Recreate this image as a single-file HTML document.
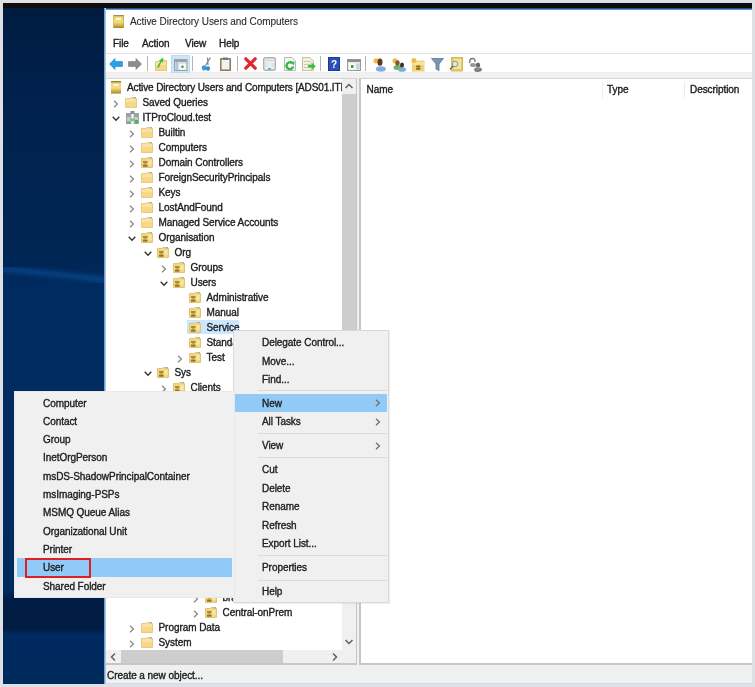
<!DOCTYPE html>
<html><head><meta charset="utf-8">
<style>
*{margin:0;padding:0;box-sizing:border-box}
html,body{width:755px;height:687px;overflow:hidden;background:#dfe0e4}
body{position:relative;font-family:"Liberation Sans",sans-serif;font-size:10px;color:#000}
.a{position:absolute}
.wrap{position:absolute;left:0;top:0;width:755px;height:687px;filter:blur(0.3px)}
.t{position:absolute;white-space:nowrap;line-height:12px;font-size:10px;color:#202024;-webkit-text-stroke:0.35px #202024;letter-spacing:-0.06px}
</style></head><body><div class="wrap">
<div class="a" style="left:3px;top:3px;width:749px;height:681px;background:linear-gradient(#001b40 0px,#00214c 90px,#002452 200px,#002656 262px,#002b60 282px,#002c62 390px,#002a5e 588px,#001c44 596px,#001c43 626px,#002a60 631px,#00295c 681px)"></div>
<svg class="a" style="left:3px;top:250px" width="101" height="45" viewBox="0 0 101 45"><defs><filter id="bl"><feGaussianBlur stdDeviation="2.2"/></filter></defs><path d="M-5 19 Q40 22 110 31" stroke="#0a5aa8" stroke-width="6" fill="none" opacity=".5" filter="url(#bl)"/></svg>
<div class="a" style="left:3px;top:3px;width:749px;height:5px;background:#0e0d0d"></div>
<div class="a" style="left:105px;top:8px;width:647px;height:676px;background:#fff"></div>
<div class="a" style="left:104px;top:8px;width:648px;height:2px;background:linear-gradient(#07306e,#8fb0d8)"></div>
<div class="a" style="left:104px;top:8px;width:2px;height:676px;background:linear-gradient(90deg,#5f8cc0,#c4dcf0)"></div>
<svg class="a" style="left:113px;top:15px" width="11" height="13" viewBox="0 0 11 13"><defs><linearGradient id="gy" x1="0" x2="0" y1="0" y2="1"><stop offset="0" stop-color="#e8d070"/><stop offset=".55" stop-color="#f4dc84"/><stop offset=".85" stop-color="#c8a838"/><stop offset="1" stop-color="#9a8028"/></linearGradient></defs><rect x="0" y="0" width="11" height="13" fill="url(#gy)"/><rect x="0" y="0" width="11" height="1.2" fill="#a09040"/><rect x="3" y="2.8" width="5" height="2.2" fill="#fff8d8"/><rect x="0" y="0" width="1" height="13" fill="#d8bc58" opacity=".7"/><rect x="10" y="0" width="1" height="13" fill="#c0a040" opacity=".7"/></svg>
<div class="t" style="left:130px;top:15.5px;color:#2a2a2a;-webkit-text-stroke:0.1px #2a2a2a">Active Directory Users and Computers</div>
<div class="t" style="left:113px;top:38.0px;">File</div>
<div class="t" style="left:142px;top:38.0px;">Action</div>
<div class="t" style="left:185px;top:38.0px;">View</div>
<div class="t" style="left:219px;top:38.0px;">Help</div>
<div class="a" style="left:106px;top:53px;width:646px;height:1px;background:#e3e3e3"></div>
<div class="a" style="left:106px;top:72px;width:646px;height:6px;background:#f0f0f0"></div>
<svg class="a" style="left:109px;top:58px" width="14" height="12" viewBox="0 0 14 12"><path d="M0.5 6 L6 0.5 V3.5 H13.5 V8.5 H6 V11.5Z" fill="#2d9ee8" stroke="#1f7fc8" stroke-width="0.6"/></svg>
<svg class="a" style="left:128px;top:58px" width="14" height="12" viewBox="0 0 14 12"><path d="M13.5 6 L8 0.5 V3.5 H0.5 V8.5 H8 V11.5Z" fill="#8c8c8c" stroke="#777" stroke-width="0.6"/></svg>
<div class="a" style="left:147px;top:56px;width:1px;height:15px;background:#b4b4b4"></div>
<div class="a" style="left:192px;top:56px;width:1px;height:15px;background:#b4b4b4"></div>
<div class="a" style="left:237px;top:56px;width:1px;height:15px;background:#b4b4b4"></div>
<div class="a" style="left:320px;top:56px;width:1px;height:15px;background:#b4b4b4"></div>
<div class="a" style="left:365px;top:56px;width:1px;height:15px;background:#b4b4b4"></div>
<svg class="a" style="left:155px;top:57px" width="13" height="14" viewBox="0 0 13 14"><path d="M0.5 4.5 H5 L6 3.5 H11.5 V13.5 H0.5Z" fill="#f6d88a" stroke="#e6c878"/><rect x="1" y="5" width="10" height="3" fill="#f9e4a8"/><path d="M2 10.5 Q3.5 6.5 5.5 4.5 L4 3.5 L8.5 0.5 L8 5.5 L6.8 4.8 Q5 7 4 10.5Z" fill="#3cc03c"/></svg>
<div class="a" style="left:171px;top:55px;width:19px;height:18px;background:#cce5f9;border:1px solid #bcdcf6"></div>
<svg class="a" style="left:174px;top:59px" width="14" height="12" viewBox="0 0 14 12"><rect x="0.5" y="0.5" width="12.5" height="11" fill="#dde2e8" stroke="#9ca2aa"/><rect x="0.5" y="0.5" width="12.5" height="2.5" fill="#9aa0a6"/><rect x="1.5" y="3" width="2.5" height="8" fill="#b8c4d2"/><rect x="5.5" y="5" width="6.5" height="5.5" fill="#fafafa"/><circle cx="8.5" cy="7.8" r="1.3" fill="#2fa23a"/></svg>
<svg class="a" style="left:201px;top:57px" width="11" height="14" viewBox="0 0 11 14"><path d="M9.5 0.5 L4.5 8.5 M6.5 0.5 L7 8" stroke="#8a8a8a" stroke-width="1.3" fill="none"/><ellipse cx="3.2" cy="10.8" rx="2.4" ry="2.6" fill="#3a9be0"/><ellipse cx="7" cy="11.5" rx="2" ry="2.2" fill="#2f86cc"/></svg>
<svg class="a" style="left:220px;top:57px" width="11" height="14" viewBox="0 0 11 14"><rect x="0.8" y="1.8" width="9.4" height="11.4" fill="#eef2f6" stroke="#8a6a44" stroke-width="1.4"/><rect x="3" y="0.5" width="5" height="2.5" fill="#777"/></svg>
<svg class="a" style="left:244px;top:57px" width="13" height="13" viewBox="0 0 13 13"><path d="M1.8 1.8 L11.2 11.2 M11.2 1.8 L1.8 11.2" stroke="#e3262b" stroke-width="3.2" stroke-linecap="round"/></svg>
<svg class="a" style="left:263px;top:57px" width="13" height="14" viewBox="0 0 13 14"><rect x="0.7" y="0.7" width="11.6" height="12.6" rx="1.5" fill="#eceeef" stroke="#b2b2b2" stroke-width="1.4"/><rect x="2.5" y="3" width="8" height="1" fill="#d0d0d0"/><rect x="2.5" y="6" width="2" height="4" fill="#cfe3ea"/><rect x="8.5" y="6" width="2" height="4" fill="#d8e6d8"/><rect x="5" y="11" width="3" height="1.5" fill="#3aa8d8"/></svg>
<svg class="a" style="left:284px;top:57px" width="12" height="14" viewBox="0 0 12 14"><path d="M0.5 0.5 H8 L11.5 4 V13.5 H0.5Z" fill="#f6f6f6" stroke="#b8b8b8"/><path d="M8.2 6.2 A3.4 3.4 0 1 0 9.2 9.5" fill="none" stroke="#34b83a" stroke-width="2.4"/><path d="M6.5 5 L10.5 4.5 L10 8.5Z" fill="#34b83a"/></svg>
<svg class="a" style="left:302px;top:57px" width="14" height="14" viewBox="0 0 14 14"><path d="M0.5 0.5 H8 L11.5 4 V13.5 H0.5Z" fill="#f4f0dc" stroke="#c4c0a8"/><rect x="2" y="4" width="7" height="0.8" fill="#c8c0a0"/><rect x="2" y="7" width="7" height="0.8" fill="#c8c0a0"/><rect x="2" y="10" width="7" height="0.8" fill="#c8c0a0"/><path d="M6 8 H9.5 V5.5 L13.8 9.3 L9.5 13 V10.5 H6Z" fill="#3cbc44"/></svg>
<svg class="a" style="left:328px;top:57px" width="12" height="14" viewBox="0 0 12 14"><rect x="0.5" y="0.5" width="11" height="13" fill="#2a4fb8" stroke="#1a3a90"/><text x="6" y="11" font-size="10" font-family="Liberation Sans" font-weight="bold" fill="#fff" text-anchor="middle">?</text></svg>
<svg class="a" style="left:347px;top:59px" width="14" height="12" viewBox="0 0 14 12"><rect x="0.5" y="0.5" width="13" height="11" fill="#eaeaea" stroke="#9a9a9a"/><rect x="0.5" y="0.5" width="13" height="2.5" fill="#8c8c8c"/><rect x="2" y="4.5" width="6" height="6" fill="#fff"/><rect x="4" y="6" width="2.5" height="3" fill="#2fa23a"/><rect x="9.5" y="4.5" width="3" height="6" fill="#c8d0d8"/></svg>
<svg class="a" style="left:373px;top:57px" width="14" height="15" viewBox="0 0 14 15"><circle cx="3" cy="3.8" r="2.6" fill="#f2bb48"/><ellipse cx="7.8" cy="12" rx="5" ry="2.8" fill="#80aee0"/><ellipse cx="7" cy="5.2" rx="2.5" ry="3.6" fill="#5a3a22"/></svg>
<svg class="a" style="left:392px;top:57px" width="15" height="15" viewBox="0 0 15 15"><circle cx="3" cy="3.8" r="2.6" fill="#f2bb48"/><ellipse cx="5.5" cy="10.5" rx="4" ry="2.5" fill="#6ab85a"/><ellipse cx="5.5" cy="6" rx="2.2" ry="2.8" fill="#7a5a40"/><ellipse cx="10" cy="12.5" rx="4" ry="2.3" fill="#7aaee0"/><ellipse cx="10" cy="8" rx="2" ry="2.6" fill="#3a3020"/></svg>
<svg class="a" style="left:411px;top:57px" width="14" height="15" viewBox="0 0 14 15"><path d="M1 4.5 H6 L7 3.5 H13.5 V14.5 H1Z" fill="#f0d078"/><rect x="1.5" y="5" width="11.5" height="3" fill="#f8e2a0"/><circle cx="3" cy="3.5" r="2.6" fill="#f2bb48"/><rect x="5" y="8" width="4.5" height="5" fill="#c0a040"/><rect x="5.5" y="9" width="3.5" height="1" fill="#806820"/><rect x="5.5" y="11" width="3.5" height="1.5" fill="#806820"/></svg>
<svg class="a" style="left:431px;top:58px" width="13" height="13" viewBox="0 0 13 13"><path d="M0.5 0.5 H12.5 L8 6 V12.5 L5 11 V6Z" fill="#7896b2" stroke="#6a88a4"/></svg>
<svg class="a" style="left:449px;top:57px" width="14" height="15" viewBox="0 0 14 15"><rect x="2.5" y="0.5" width="11" height="13.5" fill="#e4cc68" stroke="#d4bc58"/><rect x="5" y="2" width="7" height="10" fill="#f2e49a"/><circle cx="6" cy="7" r="2.8" fill="#dfe8e0" stroke="#8a9a8a" stroke-width="1"/><path d="M4 9 L1 12.5" stroke="#6a6a6a" stroke-width="1.3"/></svg>
<svg class="a" style="left:468px;top:57px" width="15" height="15" viewBox="0 0 15 15"><path d="M2 6 Q1 1.5 4.5 1.5 Q7.5 1.5 7 5" fill="none" stroke="#777" stroke-width="1.4"/><ellipse cx="5" cy="8" rx="3" ry="2" fill="#9a9a9a"/><ellipse cx="10" cy="8" rx="2.2" ry="2.6" fill="#6a6a6a"/><ellipse cx="10" cy="12.5" rx="4" ry="2.2" fill="#8a8a8a"/><path d="M7 14 Q10 15 13 13" stroke="#555" stroke-width=".8" fill="none"/></svg>
<div class="a" style="left:106px;top:78px;width:251px;height:587px;background:#fff;border-top:1px solid #d4d4d4;border-right:2px solid #c6c6c6;border-bottom:2px solid #c6c6c6"></div>
<div class="a" style="left:357px;top:78px;width:3px;height:587px;background:#f0f0f0"></div>
<div class="a" style="left:359px;top:78px;width:393px;height:587px;background:#fff;border-top:1px solid #d4d4d4;border-left:2px solid #c6c6c6;border-bottom:2px solid #c6c6c6"></div>
<div class="a" style="left:106px;top:665px;width:646px;height:18px;background:#f0f0f0"></div>
<div class="a" style="left:106px;top:683px;width:646px;height:1px;background:#cfdff0"></div>
<div class="t" style="left:107px;top:669.5px;">Create a new object...</div>
<div class="a" style="left:105px;top:79px;width:237px;height:571px;overflow:hidden">
<div class="t" style="left:22px;top:2.5px;letter-spacing:-0.12px">Active Directory Users and Computers [ADS01.ITProCloud.test]</div>
<svg class="a" style="left:6px;top:2px" width="11" height="13" viewBox="0 0 11 13"><defs><linearGradient id="gy2" x1="0" x2="0" y1="0" y2="1"><stop offset="0" stop-color="#e8d070"/><stop offset=".55" stop-color="#f4dc84"/><stop offset=".85" stop-color="#c8a838"/><stop offset="1" stop-color="#9a8028"/></linearGradient></defs><rect x="0" y="0" width="10" height="12.5" fill="url(#gy2)"/><rect x="0" y="0" width="10" height="1.4" fill="#8c8a3a"/><rect x="2.5" y="2.8" width="5" height="2.2" fill="#fff8d8"/></svg>
<div class="t" style="left:37.5px;top:17.5px;">Saved Queries</div>
<svg class="a" style="left:20px;top:18px" width="12" height="11" viewBox="0 0 12 11"><path d="M0.5 1.5 H5 L6 0.5 H10.5 V1.5 H11.5 V10.5 H0.5Z" fill="#f6d888" stroke="#e8cb7c"/><rect x="1" y="2" width="10" height="3" fill="#f9e3a4"/><rect x="9" y="0" width="2" height="1.5" fill="#9cb4cc"/></svg>
<svg class="a" style="left:8px;top:21px" width="6" height="8" viewBox="0 0 6 8"><path d="M1 0.8 L4.4 4 L1 7.2" fill="none" stroke="#8a8a8a" stroke-width="1.3"/></svg>
<div class="t" style="left:37.5px;top:32.5px;">ITProCloud.test</div>
<svg class="a" style="left:21px;top:32px" width="13" height="13" viewBox="0 0 13 13"><rect x="4.5" y="0" width="4" height="3" fill="#8a9096"/><rect x="0.5" y="2.5" width="4.5" height="10" fill="#c4cad2" stroke="#8e949c" stroke-width="0.8"/><rect x="8" y="2.5" width="4.5" height="10" fill="#c4cad2" stroke="#8e949c" stroke-width="0.8"/><rect x="1" y="3" width="3.5" height="3" fill="#9aa0a8"/><rect x="8.5" y="3" width="3.5" height="3" fill="#9aa0a8"/><rect x="5" y="7.5" width="3" height="2.5" fill="#7cc850"/><rect x="9" y="9" width="3" height="3.5" fill="#4cb840"/><rect x="1" y="10.5" width="3.5" height="2" fill="#6aa878"/></svg>
<svg class="a" style="left:7px;top:37px" width="8" height="6" viewBox="0 0 8 6"><path d="M0.7 0.8 L4 4.2 L7.3 0.8" fill="none" stroke="#333" stroke-width="1.4"/></svg>
<div class="t" style="left:53.5px;top:47.5px;">Builtin</div>
<svg class="a" style="left:36px;top:48px" width="12" height="11" viewBox="0 0 12 11"><path d="M0.5 1.5 H5 L6 0.5 H10.5 V1.5 H11.5 V10.5 H0.5Z" fill="#f6d888" stroke="#e8cb7c"/><rect x="1" y="2" width="10" height="3" fill="#f9e3a4"/><rect x="9" y="0" width="2" height="1.5" fill="#9cb4cc"/></svg>
<svg class="a" style="left:24px;top:51px" width="6" height="8" viewBox="0 0 6 8"><path d="M1 0.8 L4.4 4 L1 7.2" fill="none" stroke="#8a8a8a" stroke-width="1.3"/></svg>
<div class="t" style="left:53.5px;top:62.5px;">Computers</div>
<svg class="a" style="left:36px;top:63px" width="12" height="11" viewBox="0 0 12 11"><path d="M0.5 1.5 H5 L6 0.5 H10.5 V1.5 H11.5 V10.5 H0.5Z" fill="#f6d888" stroke="#e8cb7c"/><rect x="1" y="2" width="10" height="3" fill="#f9e3a4"/><rect x="9" y="0" width="2" height="1.5" fill="#9cb4cc"/></svg>
<svg class="a" style="left:24px;top:66px" width="6" height="8" viewBox="0 0 6 8"><path d="M1 0.8 L4.4 4 L1 7.2" fill="none" stroke="#8a8a8a" stroke-width="1.3"/></svg>
<div class="t" style="left:53.5px;top:77.5px;">Domain Controllers</div>
<svg class="a" style="left:36px;top:78px" width="12" height="11" viewBox="0 0 12 11"><path d="M0.5 1.5 H5 L6 0.5 H10.5 V1.5 H11.5 V10.5 H0.5Z" fill="#f2d684" stroke="#e2c474"/><rect x="9" y="0" width="2" height="1.5" fill="#9cb4cc"/><rect x="7.5" y="3" width="3" height="5" fill="#f9e6a6"/><rect x="2" y="4" width="4.5" height="2" fill="#a88d34"/><rect x="3" y="6" width="2.5" height="1" fill="#c4a84a"/><rect x="2" y="7.5" width="4.5" height="2.2" fill="#8e7624"/></svg>
<svg class="a" style="left:24px;top:81px" width="6" height="8" viewBox="0 0 6 8"><path d="M1 0.8 L4.4 4 L1 7.2" fill="none" stroke="#8a8a8a" stroke-width="1.3"/></svg>
<div class="t" style="left:53.5px;top:92.5px;">ForeignSecurityPrincipals</div>
<svg class="a" style="left:36px;top:93px" width="12" height="11" viewBox="0 0 12 11"><path d="M0.5 1.5 H5 L6 0.5 H10.5 V1.5 H11.5 V10.5 H0.5Z" fill="#f6d888" stroke="#e8cb7c"/><rect x="1" y="2" width="10" height="3" fill="#f9e3a4"/><rect x="9" y="0" width="2" height="1.5" fill="#9cb4cc"/></svg>
<svg class="a" style="left:24px;top:96px" width="6" height="8" viewBox="0 0 6 8"><path d="M1 0.8 L4.4 4 L1 7.2" fill="none" stroke="#8a8a8a" stroke-width="1.3"/></svg>
<div class="t" style="left:53.5px;top:107.5px;">Keys</div>
<svg class="a" style="left:36px;top:108px" width="12" height="11" viewBox="0 0 12 11"><path d="M0.5 1.5 H5 L6 0.5 H10.5 V1.5 H11.5 V10.5 H0.5Z" fill="#f6d888" stroke="#e8cb7c"/><rect x="1" y="2" width="10" height="3" fill="#f9e3a4"/><rect x="9" y="0" width="2" height="1.5" fill="#9cb4cc"/></svg>
<svg class="a" style="left:24px;top:111px" width="6" height="8" viewBox="0 0 6 8"><path d="M1 0.8 L4.4 4 L1 7.2" fill="none" stroke="#8a8a8a" stroke-width="1.3"/></svg>
<div class="t" style="left:53.5px;top:122.5px;">LostAndFound</div>
<svg class="a" style="left:36px;top:123px" width="12" height="11" viewBox="0 0 12 11"><path d="M0.5 1.5 H5 L6 0.5 H10.5 V1.5 H11.5 V10.5 H0.5Z" fill="#f6d888" stroke="#e8cb7c"/><rect x="1" y="2" width="10" height="3" fill="#f9e3a4"/><rect x="9" y="0" width="2" height="1.5" fill="#9cb4cc"/></svg>
<svg class="a" style="left:24px;top:126px" width="6" height="8" viewBox="0 0 6 8"><path d="M1 0.8 L4.4 4 L1 7.2" fill="none" stroke="#8a8a8a" stroke-width="1.3"/></svg>
<div class="t" style="left:53.5px;top:137.5px;">Managed Service Accounts</div>
<svg class="a" style="left:36px;top:138px" width="12" height="11" viewBox="0 0 12 11"><path d="M0.5 1.5 H5 L6 0.5 H10.5 V1.5 H11.5 V10.5 H0.5Z" fill="#f6d888" stroke="#e8cb7c"/><rect x="1" y="2" width="10" height="3" fill="#f9e3a4"/><rect x="9" y="0" width="2" height="1.5" fill="#9cb4cc"/></svg>
<svg class="a" style="left:24px;top:141px" width="6" height="8" viewBox="0 0 6 8"><path d="M1 0.8 L4.4 4 L1 7.2" fill="none" stroke="#8a8a8a" stroke-width="1.3"/></svg>
<div class="t" style="left:53.5px;top:152.5px;">Organisation</div>
<svg class="a" style="left:36px;top:153px" width="12" height="11" viewBox="0 0 12 11"><path d="M0.5 1.5 H5 L6 0.5 H10.5 V1.5 H11.5 V10.5 H0.5Z" fill="#f2d684" stroke="#e2c474"/><rect x="9" y="0" width="2" height="1.5" fill="#9cb4cc"/><rect x="7.5" y="3" width="3" height="5" fill="#f9e6a6"/><rect x="2" y="4" width="4.5" height="2" fill="#a88d34"/><rect x="3" y="6" width="2.5" height="1" fill="#c4a84a"/><rect x="2" y="7.5" width="4.5" height="2.2" fill="#8e7624"/></svg>
<svg class="a" style="left:23px;top:157px" width="8" height="6" viewBox="0 0 8 6"><path d="M0.7 0.8 L4 4.2 L7.3 0.8" fill="none" stroke="#333" stroke-width="1.4"/></svg>
<div class="t" style="left:69.5px;top:167.5px;">Org</div>
<svg class="a" style="left:52px;top:168px" width="12" height="11" viewBox="0 0 12 11"><path d="M0.5 1.5 H5 L6 0.5 H10.5 V1.5 H11.5 V10.5 H0.5Z" fill="#f2d684" stroke="#e2c474"/><rect x="9" y="0" width="2" height="1.5" fill="#9cb4cc"/><rect x="7.5" y="3" width="3" height="5" fill="#f9e6a6"/><rect x="2" y="4" width="4.5" height="2" fill="#a88d34"/><rect x="3" y="6" width="2.5" height="1" fill="#c4a84a"/><rect x="2" y="7.5" width="4.5" height="2.2" fill="#8e7624"/></svg>
<svg class="a" style="left:39px;top:172px" width="8" height="6" viewBox="0 0 8 6"><path d="M0.7 0.8 L4 4.2 L7.3 0.8" fill="none" stroke="#333" stroke-width="1.4"/></svg>
<div class="t" style="left:85.5px;top:182.5px;">Groups</div>
<svg class="a" style="left:68px;top:183px" width="12" height="11" viewBox="0 0 12 11"><path d="M0.5 1.5 H5 L6 0.5 H10.5 V1.5 H11.5 V10.5 H0.5Z" fill="#f2d684" stroke="#e2c474"/><rect x="9" y="0" width="2" height="1.5" fill="#9cb4cc"/><rect x="7.5" y="3" width="3" height="5" fill="#f9e6a6"/><rect x="2" y="4" width="4.5" height="2" fill="#a88d34"/><rect x="3" y="6" width="2.5" height="1" fill="#c4a84a"/><rect x="2" y="7.5" width="4.5" height="2.2" fill="#8e7624"/></svg>
<svg class="a" style="left:56px;top:186px" width="6" height="8" viewBox="0 0 6 8"><path d="M1 0.8 L4.4 4 L1 7.2" fill="none" stroke="#8a8a8a" stroke-width="1.3"/></svg>
<div class="t" style="left:85.5px;top:197.5px;">Users</div>
<svg class="a" style="left:68px;top:198px" width="12" height="11" viewBox="0 0 12 11"><path d="M0.5 1.5 H5 L6 0.5 H10.5 V1.5 H11.5 V10.5 H0.5Z" fill="#f2d684" stroke="#e2c474"/><rect x="9" y="0" width="2" height="1.5" fill="#9cb4cc"/><rect x="7.5" y="3" width="3" height="5" fill="#f9e6a6"/><rect x="2" y="4" width="4.5" height="2" fill="#a88d34"/><rect x="3" y="6" width="2.5" height="1" fill="#c4a84a"/><rect x="2" y="7.5" width="4.5" height="2.2" fill="#8e7624"/></svg>
<svg class="a" style="left:55px;top:202px" width="8" height="6" viewBox="0 0 8 6"><path d="M0.7 0.8 L4 4.2 L7.3 0.8" fill="none" stroke="#333" stroke-width="1.4"/></svg>
<div class="t" style="left:101.5px;top:212.5px;">Administrative</div>
<svg class="a" style="left:84px;top:213px" width="12" height="11" viewBox="0 0 12 11"><path d="M0.5 1.5 H5 L6 0.5 H10.5 V1.5 H11.5 V10.5 H0.5Z" fill="#f2d684" stroke="#e2c474"/><rect x="9" y="0" width="2" height="1.5" fill="#9cb4cc"/><rect x="7.5" y="3" width="3" height="5" fill="#f9e6a6"/><rect x="2" y="4" width="4.5" height="2" fill="#a88d34"/><rect x="3" y="6" width="2.5" height="1" fill="#c4a84a"/><rect x="2" y="7.5" width="4.5" height="2.2" fill="#8e7624"/></svg>
<div class="t" style="left:101.5px;top:227.5px;">Manual</div>
<svg class="a" style="left:84px;top:228px" width="12" height="11" viewBox="0 0 12 11"><path d="M0.5 1.5 H5 L6 0.5 H10.5 V1.5 H11.5 V10.5 H0.5Z" fill="#f2d684" stroke="#e2c474"/><rect x="9" y="0" width="2" height="1.5" fill="#9cb4cc"/><rect x="7.5" y="3" width="3" height="5" fill="#f9e6a6"/><rect x="2" y="4" width="4.5" height="2" fill="#a88d34"/><rect x="3" y="6" width="2.5" height="1" fill="#c4a84a"/><rect x="2" y="7.5" width="4.5" height="2.2" fill="#8e7624"/></svg>
<div class="a" style="left:82.0px;top:240.5px;width:52px;height:14px;background:#cce8ff"></div>
<div class="t" style="left:101.5px;top:242.5px;">Service</div>
<svg class="a" style="left:84px;top:243px" width="12" height="11" viewBox="0 0 12 11"><path d="M0.5 1.5 H5 L6 0.5 H10.5 V1.5 H11.5 V10.5 H0.5Z" fill="#f2d684" stroke="#e2c474"/><rect x="9" y="0" width="2" height="1.5" fill="#9cb4cc"/><rect x="7.5" y="3" width="3" height="5" fill="#f9e6a6"/><rect x="2" y="4" width="4.5" height="2" fill="#a88d34"/><rect x="3" y="6" width="2.5" height="1" fill="#c4a84a"/><rect x="2" y="7.5" width="4.5" height="2.2" fill="#8e7624"/></svg>
<div class="t" style="left:101.5px;top:257.5px;">Standard</div>
<svg class="a" style="left:84px;top:258px" width="12" height="11" viewBox="0 0 12 11"><path d="M0.5 1.5 H5 L6 0.5 H10.5 V1.5 H11.5 V10.5 H0.5Z" fill="#f2d684" stroke="#e2c474"/><rect x="9" y="0" width="2" height="1.5" fill="#9cb4cc"/><rect x="7.5" y="3" width="3" height="5" fill="#f9e6a6"/><rect x="2" y="4" width="4.5" height="2" fill="#a88d34"/><rect x="3" y="6" width="2.5" height="1" fill="#c4a84a"/><rect x="2" y="7.5" width="4.5" height="2.2" fill="#8e7624"/></svg>
<div class="t" style="left:101.5px;top:272.5px;">Test</div>
<svg class="a" style="left:84px;top:273px" width="12" height="11" viewBox="0 0 12 11"><path d="M0.5 1.5 H5 L6 0.5 H10.5 V1.5 H11.5 V10.5 H0.5Z" fill="#f2d684" stroke="#e2c474"/><rect x="9" y="0" width="2" height="1.5" fill="#9cb4cc"/><rect x="7.5" y="3" width="3" height="5" fill="#f9e6a6"/><rect x="2" y="4" width="4.5" height="2" fill="#a88d34"/><rect x="3" y="6" width="2.5" height="1" fill="#c4a84a"/><rect x="2" y="7.5" width="4.5" height="2.2" fill="#8e7624"/></svg>
<svg class="a" style="left:72px;top:276px" width="6" height="8" viewBox="0 0 6 8"><path d="M1 0.8 L4.4 4 L1 7.2" fill="none" stroke="#8a8a8a" stroke-width="1.3"/></svg>
<div class="t" style="left:69.5px;top:287.5px;">Sys</div>
<svg class="a" style="left:52px;top:288px" width="12" height="11" viewBox="0 0 12 11"><path d="M0.5 1.5 H5 L6 0.5 H10.5 V1.5 H11.5 V10.5 H0.5Z" fill="#f2d684" stroke="#e2c474"/><rect x="9" y="0" width="2" height="1.5" fill="#9cb4cc"/><rect x="7.5" y="3" width="3" height="5" fill="#f9e6a6"/><rect x="2" y="4" width="4.5" height="2" fill="#a88d34"/><rect x="3" y="6" width="2.5" height="1" fill="#c4a84a"/><rect x="2" y="7.5" width="4.5" height="2.2" fill="#8e7624"/></svg>
<svg class="a" style="left:39px;top:292px" width="8" height="6" viewBox="0 0 8 6"><path d="M0.7 0.8 L4 4.2 L7.3 0.8" fill="none" stroke="#333" stroke-width="1.4"/></svg>
<div class="t" style="left:85.5px;top:302.5px;">Clients</div>
<svg class="a" style="left:68px;top:303px" width="12" height="11" viewBox="0 0 12 11"><path d="M0.5 1.5 H5 L6 0.5 H10.5 V1.5 H11.5 V10.5 H0.5Z" fill="#f2d684" stroke="#e2c474"/><rect x="9" y="0" width="2" height="1.5" fill="#9cb4cc"/><rect x="7.5" y="3" width="3" height="5" fill="#f9e6a6"/><rect x="2" y="4" width="4.5" height="2" fill="#a88d34"/><rect x="3" y="6" width="2.5" height="1" fill="#c4a84a"/><rect x="2" y="7.5" width="4.5" height="2.2" fill="#8e7624"/></svg>
<svg class="a" style="left:56px;top:306px" width="6" height="8" viewBox="0 0 6 8"><path d="M1 0.8 L4.4 4 L1 7.2" fill="none" stroke="#8a8a8a" stroke-width="1.3"/></svg>
<div class="t" style="left:117.5px;top:317.5px;">Item</div>
<svg class="a" style="left:100px;top:318px" width="12" height="11" viewBox="0 0 12 11"><path d="M0.5 1.5 H5 L6 0.5 H10.5 V1.5 H11.5 V10.5 H0.5Z" fill="#f2d684" stroke="#e2c474"/><rect x="9" y="0" width="2" height="1.5" fill="#9cb4cc"/><rect x="7.5" y="3" width="3" height="5" fill="#f9e6a6"/><rect x="2" y="4" width="4.5" height="2" fill="#a88d34"/><rect x="3" y="6" width="2.5" height="1" fill="#c4a84a"/><rect x="2" y="7.5" width="4.5" height="2.2" fill="#8e7624"/></svg>
<svg class="a" style="left:88px;top:321px" width="6" height="8" viewBox="0 0 6 8"><path d="M1 0.8 L4.4 4 L1 7.2" fill="none" stroke="#8a8a8a" stroke-width="1.3"/></svg>
<div class="t" style="left:117.5px;top:332.5px;">Item</div>
<svg class="a" style="left:100px;top:333px" width="12" height="11" viewBox="0 0 12 11"><path d="M0.5 1.5 H5 L6 0.5 H10.5 V1.5 H11.5 V10.5 H0.5Z" fill="#f2d684" stroke="#e2c474"/><rect x="9" y="0" width="2" height="1.5" fill="#9cb4cc"/><rect x="7.5" y="3" width="3" height="5" fill="#f9e6a6"/><rect x="2" y="4" width="4.5" height="2" fill="#a88d34"/><rect x="3" y="6" width="2.5" height="1" fill="#c4a84a"/><rect x="2" y="7.5" width="4.5" height="2.2" fill="#8e7624"/></svg>
<svg class="a" style="left:88px;top:336px" width="6" height="8" viewBox="0 0 6 8"><path d="M1 0.8 L4.4 4 L1 7.2" fill="none" stroke="#8a8a8a" stroke-width="1.3"/></svg>
<div class="t" style="left:117.5px;top:347.5px;">Item</div>
<svg class="a" style="left:100px;top:348px" width="12" height="11" viewBox="0 0 12 11"><path d="M0.5 1.5 H5 L6 0.5 H10.5 V1.5 H11.5 V10.5 H0.5Z" fill="#f2d684" stroke="#e2c474"/><rect x="9" y="0" width="2" height="1.5" fill="#9cb4cc"/><rect x="7.5" y="3" width="3" height="5" fill="#f9e6a6"/><rect x="2" y="4" width="4.5" height="2" fill="#a88d34"/><rect x="3" y="6" width="2.5" height="1" fill="#c4a84a"/><rect x="2" y="7.5" width="4.5" height="2.2" fill="#8e7624"/></svg>
<svg class="a" style="left:88px;top:351px" width="6" height="8" viewBox="0 0 6 8"><path d="M1 0.8 L4.4 4 L1 7.2" fill="none" stroke="#8a8a8a" stroke-width="1.3"/></svg>
<div class="t" style="left:117.5px;top:362.5px;">Item</div>
<svg class="a" style="left:100px;top:363px" width="12" height="11" viewBox="0 0 12 11"><path d="M0.5 1.5 H5 L6 0.5 H10.5 V1.5 H11.5 V10.5 H0.5Z" fill="#f2d684" stroke="#e2c474"/><rect x="9" y="0" width="2" height="1.5" fill="#9cb4cc"/><rect x="7.5" y="3" width="3" height="5" fill="#f9e6a6"/><rect x="2" y="4" width="4.5" height="2" fill="#a88d34"/><rect x="3" y="6" width="2.5" height="1" fill="#c4a84a"/><rect x="2" y="7.5" width="4.5" height="2.2" fill="#8e7624"/></svg>
<svg class="a" style="left:88px;top:366px" width="6" height="8" viewBox="0 0 6 8"><path d="M1 0.8 L4.4 4 L1 7.2" fill="none" stroke="#8a8a8a" stroke-width="1.3"/></svg>
<div class="t" style="left:117.5px;top:377.5px;">Item</div>
<svg class="a" style="left:100px;top:378px" width="12" height="11" viewBox="0 0 12 11"><path d="M0.5 1.5 H5 L6 0.5 H10.5 V1.5 H11.5 V10.5 H0.5Z" fill="#f2d684" stroke="#e2c474"/><rect x="9" y="0" width="2" height="1.5" fill="#9cb4cc"/><rect x="7.5" y="3" width="3" height="5" fill="#f9e6a6"/><rect x="2" y="4" width="4.5" height="2" fill="#a88d34"/><rect x="3" y="6" width="2.5" height="1" fill="#c4a84a"/><rect x="2" y="7.5" width="4.5" height="2.2" fill="#8e7624"/></svg>
<svg class="a" style="left:88px;top:381px" width="6" height="8" viewBox="0 0 6 8"><path d="M1 0.8 L4.4 4 L1 7.2" fill="none" stroke="#8a8a8a" stroke-width="1.3"/></svg>
<div class="t" style="left:117.5px;top:392.5px;">Item</div>
<svg class="a" style="left:100px;top:393px" width="12" height="11" viewBox="0 0 12 11"><path d="M0.5 1.5 H5 L6 0.5 H10.5 V1.5 H11.5 V10.5 H0.5Z" fill="#f2d684" stroke="#e2c474"/><rect x="9" y="0" width="2" height="1.5" fill="#9cb4cc"/><rect x="7.5" y="3" width="3" height="5" fill="#f9e6a6"/><rect x="2" y="4" width="4.5" height="2" fill="#a88d34"/><rect x="3" y="6" width="2.5" height="1" fill="#c4a84a"/><rect x="2" y="7.5" width="4.5" height="2.2" fill="#8e7624"/></svg>
<svg class="a" style="left:88px;top:396px" width="6" height="8" viewBox="0 0 6 8"><path d="M1 0.8 L4.4 4 L1 7.2" fill="none" stroke="#8a8a8a" stroke-width="1.3"/></svg>
<div class="t" style="left:117.5px;top:407.5px;">Item</div>
<svg class="a" style="left:100px;top:408px" width="12" height="11" viewBox="0 0 12 11"><path d="M0.5 1.5 H5 L6 0.5 H10.5 V1.5 H11.5 V10.5 H0.5Z" fill="#f2d684" stroke="#e2c474"/><rect x="9" y="0" width="2" height="1.5" fill="#9cb4cc"/><rect x="7.5" y="3" width="3" height="5" fill="#f9e6a6"/><rect x="2" y="4" width="4.5" height="2" fill="#a88d34"/><rect x="3" y="6" width="2.5" height="1" fill="#c4a84a"/><rect x="2" y="7.5" width="4.5" height="2.2" fill="#8e7624"/></svg>
<svg class="a" style="left:88px;top:411px" width="6" height="8" viewBox="0 0 6 8"><path d="M1 0.8 L4.4 4 L1 7.2" fill="none" stroke="#8a8a8a" stroke-width="1.3"/></svg>
<div class="t" style="left:117.5px;top:422.5px;">Item</div>
<svg class="a" style="left:100px;top:423px" width="12" height="11" viewBox="0 0 12 11"><path d="M0.5 1.5 H5 L6 0.5 H10.5 V1.5 H11.5 V10.5 H0.5Z" fill="#f2d684" stroke="#e2c474"/><rect x="9" y="0" width="2" height="1.5" fill="#9cb4cc"/><rect x="7.5" y="3" width="3" height="5" fill="#f9e6a6"/><rect x="2" y="4" width="4.5" height="2" fill="#a88d34"/><rect x="3" y="6" width="2.5" height="1" fill="#c4a84a"/><rect x="2" y="7.5" width="4.5" height="2.2" fill="#8e7624"/></svg>
<svg class="a" style="left:88px;top:426px" width="6" height="8" viewBox="0 0 6 8"><path d="M1 0.8 L4.4 4 L1 7.2" fill="none" stroke="#8a8a8a" stroke-width="1.3"/></svg>
<div class="t" style="left:117.5px;top:437.5px;">Item</div>
<svg class="a" style="left:100px;top:438px" width="12" height="11" viewBox="0 0 12 11"><path d="M0.5 1.5 H5 L6 0.5 H10.5 V1.5 H11.5 V10.5 H0.5Z" fill="#f2d684" stroke="#e2c474"/><rect x="9" y="0" width="2" height="1.5" fill="#9cb4cc"/><rect x="7.5" y="3" width="3" height="5" fill="#f9e6a6"/><rect x="2" y="4" width="4.5" height="2" fill="#a88d34"/><rect x="3" y="6" width="2.5" height="1" fill="#c4a84a"/><rect x="2" y="7.5" width="4.5" height="2.2" fill="#8e7624"/></svg>
<svg class="a" style="left:88px;top:441px" width="6" height="8" viewBox="0 0 6 8"><path d="M1 0.8 L4.4 4 L1 7.2" fill="none" stroke="#8a8a8a" stroke-width="1.3"/></svg>
<div class="t" style="left:117.5px;top:452.5px;">Item</div>
<svg class="a" style="left:100px;top:453px" width="12" height="11" viewBox="0 0 12 11"><path d="M0.5 1.5 H5 L6 0.5 H10.5 V1.5 H11.5 V10.5 H0.5Z" fill="#f2d684" stroke="#e2c474"/><rect x="9" y="0" width="2" height="1.5" fill="#9cb4cc"/><rect x="7.5" y="3" width="3" height="5" fill="#f9e6a6"/><rect x="2" y="4" width="4.5" height="2" fill="#a88d34"/><rect x="3" y="6" width="2.5" height="1" fill="#c4a84a"/><rect x="2" y="7.5" width="4.5" height="2.2" fill="#8e7624"/></svg>
<svg class="a" style="left:88px;top:456px" width="6" height="8" viewBox="0 0 6 8"><path d="M1 0.8 L4.4 4 L1 7.2" fill="none" stroke="#8a8a8a" stroke-width="1.3"/></svg>
<div class="t" style="left:117.5px;top:467.5px;">Item</div>
<svg class="a" style="left:100px;top:468px" width="12" height="11" viewBox="0 0 12 11"><path d="M0.5 1.5 H5 L6 0.5 H10.5 V1.5 H11.5 V10.5 H0.5Z" fill="#f2d684" stroke="#e2c474"/><rect x="9" y="0" width="2" height="1.5" fill="#9cb4cc"/><rect x="7.5" y="3" width="3" height="5" fill="#f9e6a6"/><rect x="2" y="4" width="4.5" height="2" fill="#a88d34"/><rect x="3" y="6" width="2.5" height="1" fill="#c4a84a"/><rect x="2" y="7.5" width="4.5" height="2.2" fill="#8e7624"/></svg>
<svg class="a" style="left:88px;top:471px" width="6" height="8" viewBox="0 0 6 8"><path d="M1 0.8 L4.4 4 L1 7.2" fill="none" stroke="#8a8a8a" stroke-width="1.3"/></svg>
<div class="t" style="left:117.5px;top:482.5px;">Item</div>
<svg class="a" style="left:100px;top:483px" width="12" height="11" viewBox="0 0 12 11"><path d="M0.5 1.5 H5 L6 0.5 H10.5 V1.5 H11.5 V10.5 H0.5Z" fill="#f2d684" stroke="#e2c474"/><rect x="9" y="0" width="2" height="1.5" fill="#9cb4cc"/><rect x="7.5" y="3" width="3" height="5" fill="#f9e6a6"/><rect x="2" y="4" width="4.5" height="2" fill="#a88d34"/><rect x="3" y="6" width="2.5" height="1" fill="#c4a84a"/><rect x="2" y="7.5" width="4.5" height="2.2" fill="#8e7624"/></svg>
<svg class="a" style="left:88px;top:486px" width="6" height="8" viewBox="0 0 6 8"><path d="M1 0.8 L4.4 4 L1 7.2" fill="none" stroke="#8a8a8a" stroke-width="1.3"/></svg>
<div class="t" style="left:117.5px;top:497.5px;">Item</div>
<svg class="a" style="left:100px;top:498px" width="12" height="11" viewBox="0 0 12 11"><path d="M0.5 1.5 H5 L6 0.5 H10.5 V1.5 H11.5 V10.5 H0.5Z" fill="#f2d684" stroke="#e2c474"/><rect x="9" y="0" width="2" height="1.5" fill="#9cb4cc"/><rect x="7.5" y="3" width="3" height="5" fill="#f9e6a6"/><rect x="2" y="4" width="4.5" height="2" fill="#a88d34"/><rect x="3" y="6" width="2.5" height="1" fill="#c4a84a"/><rect x="2" y="7.5" width="4.5" height="2.2" fill="#8e7624"/></svg>
<svg class="a" style="left:88px;top:501px" width="6" height="8" viewBox="0 0 6 8"><path d="M1 0.8 L4.4 4 L1 7.2" fill="none" stroke="#8a8a8a" stroke-width="1.3"/></svg>
<div class="t" style="left:117.5px;top:512.5px;">branch</div>
<svg class="a" style="left:100px;top:513px" width="12" height="11" viewBox="0 0 12 11"><path d="M0.5 1.5 H5 L6 0.5 H10.5 V1.5 H11.5 V10.5 H0.5Z" fill="#f2d684" stroke="#e2c474"/><rect x="9" y="0" width="2" height="1.5" fill="#9cb4cc"/><rect x="7.5" y="3" width="3" height="5" fill="#f9e6a6"/><rect x="2" y="4" width="4.5" height="2" fill="#a88d34"/><rect x="3" y="6" width="2.5" height="1" fill="#c4a84a"/><rect x="2" y="7.5" width="4.5" height="2.2" fill="#8e7624"/></svg>
<svg class="a" style="left:88px;top:516px" width="6" height="8" viewBox="0 0 6 8"><path d="M1 0.8 L4.4 4 L1 7.2" fill="none" stroke="#8a8a8a" stroke-width="1.3"/></svg>
<div class="t" style="left:117.5px;top:527.5px;">Central-onPrem</div>
<svg class="a" style="left:100px;top:528px" width="12" height="11" viewBox="0 0 12 11"><path d="M0.5 1.5 H5 L6 0.5 H10.5 V1.5 H11.5 V10.5 H0.5Z" fill="#f2d684" stroke="#e2c474"/><rect x="9" y="0" width="2" height="1.5" fill="#9cb4cc"/><rect x="7.5" y="3" width="3" height="5" fill="#f9e6a6"/><rect x="2" y="4" width="4.5" height="2" fill="#a88d34"/><rect x="3" y="6" width="2.5" height="1" fill="#c4a84a"/><rect x="2" y="7.5" width="4.5" height="2.2" fill="#8e7624"/></svg>
<svg class="a" style="left:88px;top:531px" width="6" height="8" viewBox="0 0 6 8"><path d="M1 0.8 L4.4 4 L1 7.2" fill="none" stroke="#8a8a8a" stroke-width="1.3"/></svg>
<div class="t" style="left:53.5px;top:542.5px;">Program Data</div>
<svg class="a" style="left:36px;top:543px" width="12" height="11" viewBox="0 0 12 11"><path d="M0.5 1.5 H5 L6 0.5 H10.5 V1.5 H11.5 V10.5 H0.5Z" fill="#f6d888" stroke="#e8cb7c"/><rect x="1" y="2" width="10" height="3" fill="#f9e3a4"/><rect x="9" y="0" width="2" height="1.5" fill="#9cb4cc"/></svg>
<svg class="a" style="left:24px;top:546px" width="6" height="8" viewBox="0 0 6 8"><path d="M1 0.8 L4.4 4 L1 7.2" fill="none" stroke="#8a8a8a" stroke-width="1.3"/></svg>
<div class="t" style="left:53.5px;top:557.5px;">System</div>
<svg class="a" style="left:36px;top:558px" width="12" height="11" viewBox="0 0 12 11"><path d="M0.5 1.5 H5 L6 0.5 H10.5 V1.5 H11.5 V10.5 H0.5Z" fill="#f6d888" stroke="#e8cb7c"/><rect x="1" y="2" width="10" height="3" fill="#f9e3a4"/><rect x="9" y="0" width="2" height="1.5" fill="#9cb4cc"/></svg>
<svg class="a" style="left:24px;top:561px" width="6" height="8" viewBox="0 0 6 8"><path d="M1 0.8 L4.4 4 L1 7.2" fill="none" stroke="#8a8a8a" stroke-width="1.3"/></svg>
</div>
<div class="a" style="left:342px;top:79px;width:14px;height:571px;background:#f0f0f0"></div>
<svg class="a" style="left:344px;top:82px" width="10" height="8" viewBox="0 0 10 8"><path d="M1.5 6 L5 2.5 L8.5 6" fill="none" stroke="#606060" stroke-width="1.5"/></svg>
<div class="a" style="left:342px;top:94px;width:14px;height:400px;background:#cdcdcd"></div>
<svg class="a" style="left:344px;top:638px" width="10" height="8" viewBox="0 0 10 8"><path d="M1.5 2 L5 5.5 L8.5 2" fill="none" stroke="#606060" stroke-width="1.5"/></svg>
<div class="a" style="left:106px;top:650px;width:236px;height:13px;background:#f0f0f0"></div>
<div class="a" style="left:121px;top:650px;width:162px;height:13px;background:#cdcdcd"></div>
<svg class="a" style="left:109px;top:652px" width="8" height="10" viewBox="0 0 8 10"><path d="M6 1.5 L2.5 5 L6 8.5" fill="none" stroke="#606060" stroke-width="1.5"/></svg>
<svg class="a" style="left:331px;top:652px" width="8" height="10" viewBox="0 0 8 10"><path d="M2 1.5 L5.5 5 L2 8.5" fill="none" stroke="#606060" stroke-width="1.5"/></svg>
<div class="a" style="left:342px;top:650px;width:14px;height:13px;background:#f0f0f0"></div>
<div class="t" style="left:366.5px;top:83.5px;">Name</div>
<div class="t" style="left:607px;top:83.5px;">Type</div>
<div class="t" style="left:690px;top:83.5px;">Description</div>
<div class="a" style="left:602px;top:82px;width:1px;height:16px;background:#ececec"></div>
<div class="a" style="left:684px;top:82px;width:1px;height:16px;background:#ececec"></div>
<div class="a" style="left:233px;top:330px;width:156px;height:273px;background:#f0f0f0;border:1px solid #d9d9d9;box-shadow:1px 1px 1px rgba(0,0,0,.06)"></div>
<div class="a" style="left:235px;top:394px;width:152px;height:18px;background:#91c9f7"></div>
<div class="t" style="left:262px;top:337.0px;">Delegate Control...</div>
<div class="t" style="left:262px;top:355.5px;">Move...</div>
<div class="t" style="left:262px;top:374.0px;">Find...</div>
<div class="t" style="left:262px;top:397.5px;">New</div>
<div class="t" style="left:262px;top:416.0px;">All Tasks</div>
<div class="t" style="left:262px;top:440.0px;">View</div>
<div class="t" style="left:262px;top:464.0px;">Cut</div>
<div class="t" style="left:262px;top:482.5px;">Delete</div>
<div class="t" style="left:262px;top:501.0px;">Rename</div>
<div class="t" style="left:262px;top:519.5px;">Refresh</div>
<div class="t" style="left:262px;top:538.0px;">Export List...</div>
<div class="t" style="left:262px;top:562.0px;">Properties</div>
<div class="t" style="left:262px;top:586.0px;">Help</div>
<svg class="a" style="left:375px;top:399px" width="6" height="8" viewBox="0 0 6 8"><path d="M1 0.8 L4.4 4 L1 7.2" fill="none" stroke="#707070" stroke-width="1.3"/></svg>
<svg class="a" style="left:375px;top:417.5px" width="6" height="8" viewBox="0 0 6 8"><path d="M1 0.8 L4.4 4 L1 7.2" fill="none" stroke="#707070" stroke-width="1.3"/></svg>
<svg class="a" style="left:375px;top:441.5px" width="6" height="8" viewBox="0 0 6 8"><path d="M1 0.8 L4.4 4 L1 7.2" fill="none" stroke="#707070" stroke-width="1.3"/></svg>
<div class="a" style="left:258px;top:390px;width:129px;height:1px;background:#dcdcdc"></div>
<div class="a" style="left:258px;top:433px;width:129px;height:1px;background:#dcdcdc"></div>
<div class="a" style="left:258px;top:457px;width:129px;height:1px;background:#dcdcdc"></div>
<div class="a" style="left:258px;top:555px;width:129px;height:1px;background:#dcdcdc"></div>
<div class="a" style="left:258px;top:580px;width:129px;height:1px;background:#dcdcdc"></div>
<div class="a" style="left:14px;top:391px;width:221px;height:207px;background:#f0f0f0;border:1px solid #e8e8e8"></div>
<div class="a" style="left:17px;top:558px;width:215px;height:19px;background:#91c9f7"></div>
<div class="a" style="left:25px;top:558px;width:66px;height:20px;border:2px solid #e02020"></div>
<div class="t" style="left:43px;top:397.5px;">Computer</div>
<div class="t" style="left:43px;top:415.8px;">Contact</div>
<div class="t" style="left:43px;top:434.1px;">Group</div>
<div class="t" style="left:43px;top:452.4px;">InetOrgPerson</div>
<div class="t" style="left:43px;top:470.7px;">msDS-ShadowPrincipalContainer</div>
<div class="t" style="left:43px;top:489.0px;">msImaging-PSPs</div>
<div class="t" style="left:43px;top:507.29999999999995px;">MSMQ Queue Alias</div>
<div class="t" style="left:43px;top:525.6px;">Organizational Unit</div>
<div class="t" style="left:43px;top:543.9px;">Printer</div>
<div class="t" style="left:43px;top:562.2px;">User</div>
<div class="t" style="left:43px;top:580.5px;">Shared Folder</div>
</div></body></html>
